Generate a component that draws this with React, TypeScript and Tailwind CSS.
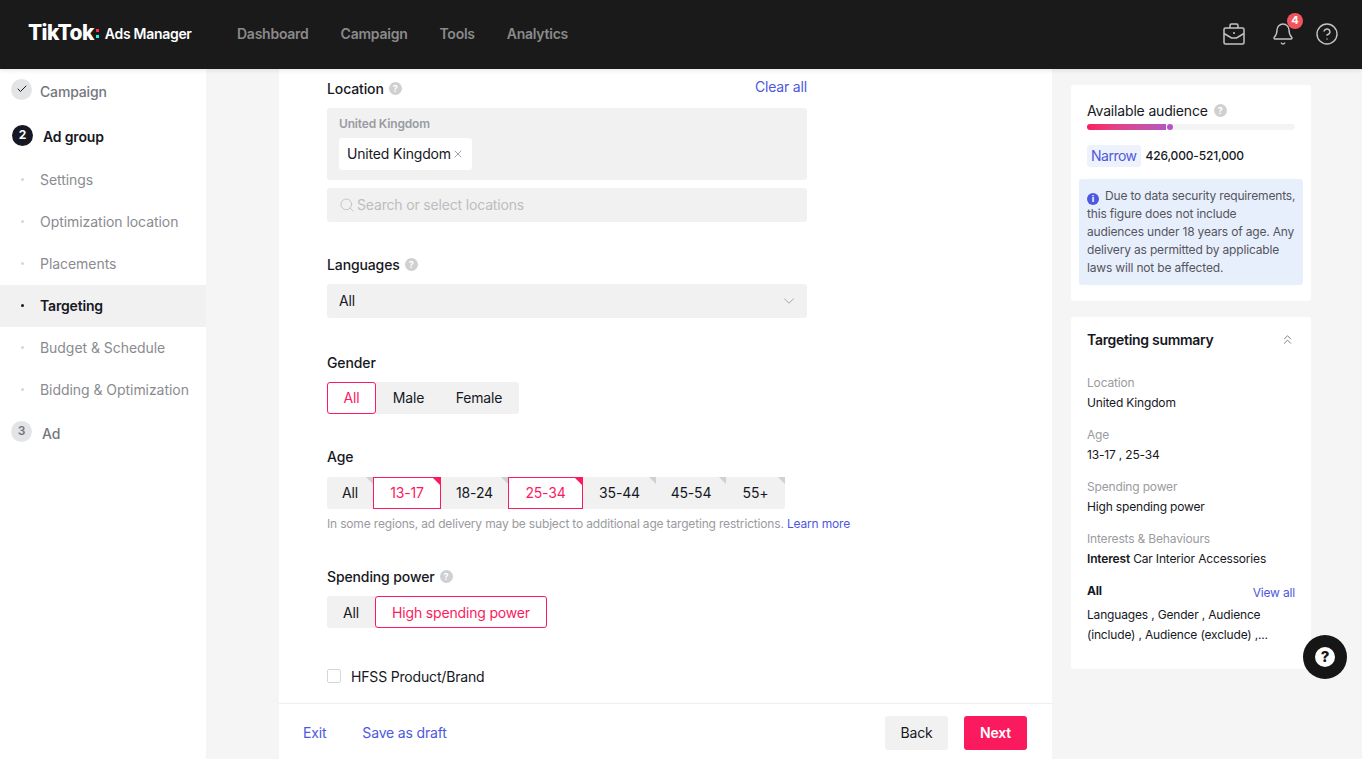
import React from 'react';
import { Check, ChevronDown, X, Search, ChevronsUp, Bell, CircleHelp } from 'lucide-react';

const steps = ['Settings', 'Optimization location', 'Placements', 'Targeting', 'Budget & Schedule', 'Bidding & Optimization'];
const ages = [
  { label: 'All', w: 'w-[46px]' },
  { label: '13-17', w: 'w-[68px]', on: true },
  { label: '18-24', w: 'w-[67px]' },
  { label: '25-34', w: 'w-[75px]', on: true },
  { label: '35-44', w: 'w-[73px]' },
  { label: '45-54', w: 'w-[70px]' },
  { label: '55+', w: 'w-[59px]' },
];

function Hint({ className = '' }: { className?: string }) {
  return (
    <span className={`inline-flex items-center justify-center w-[13px] h-[13px] rounded-full bg-[#cfd0d2] text-white text-[9px] font-bold leading-none ${className}`}>
      ?
    </span>
  );
}

function Label({ text, hint }: { text: string; hint?: boolean }) {
  return (
    <div className="flex items-center gap-[5px] h-[20px] text-[14px] font-medium tracking-[-0.12px] text-[#161823]">
      {text}
      {hint && <Hint />}
    </div>
  );
}

function Summary({ title, children }: { title: string; children: React.ReactNode }) {
  return (
    <div className="mb-[12px] text-[12px] leading-[20px]">
      <div className="text-[#9a9ba0]">{title}</div>
      <div className="text-[#161823]">{children}</div>
    </div>
  );
}

export default function App() {
  return (
    <div className="h-[759px] overflow-hidden flex flex-col bg-[#f5f5f5] font-['Inter',sans-serif] tracking-[-0.17px] text-[#161823]">
      <header className="h-[69px] shrink-0 bg-[#1a1a1a] flex items-center pl-[28px] pr-[23px] pb-[2px] shadow-[0_2px_4px_rgba(0,0,0,0.08)] z-10">
        <div className="flex items-center w-[209px] text-white">
          <span className="text-[21px] font-extrabold tracking-[-0.6px] leading-[24px] -translate-y-[1px]">TikTok</span>
          <span className="flex flex-col gap-[3px] ml-[2px] mr-[6px]">
            <span className="w-[3px] h-[3px] bg-[#fe2c55]" />
            <span className="w-[3px] h-[3px] bg-[#25f4ee]" />
          </span>
          <span className="text-[14px] font-semibold tracking-[-0.3px]">Ads Manager</span>
        </div>
        <nav className="flex gap-[32px] text-[14px] font-semibold tracking-[-0.25px] text-[#8a8a8a]">
          <span>Dashboard</span>
          <span>Campaign</span>
          <span>Tools</span>
          <span>Analytics</span>
        </nav>
        <div className="ml-auto flex items-center text-[#c4c4c4]">
          <svg width="24" height="24" viewBox="0 0 24 24" fill="none" stroke="currentColor" strokeWidth="1.5" className="mr-[25px]">
            <path d="M2 7.500a1.500 1.500 0 0 1 1.500-1.500h17a1.500 1.500 0 0 1 1.500 1.500v13a1.500 1.500 0 0 1-1.500 1.500h-17A1.500 1.500 0 0 1 2 20.500z" />
            <path d="M8 6V3.500A1.500 1.500 0 0 1 9.500 2h5A1.500 1.500 0 0 1 16 3.500V6" />
            <path d="M2 11.500l7.500 4.500h5l7.500-4.500" />
            <circle cx="12" cy="11" r="1" fill="currentColor" stroke="none" />
          </svg>
          <div className="relative mr-[20px]">
            <Bell size={24} strokeWidth={1.4} />
            <span className="absolute -top-[9px] left-[16px] w-[16px] h-[16px] rounded-full bg-[#f2545b] text-white text-[11px] font-bold flex items-center justify-center">4</span>
          </div>
          <CircleHelp size={24} strokeWidth={1.4} />
        </div>
      </header>

      <div className="flex flex-1 min-h-0">
        <aside className="w-[206px] shrink-0 bg-white">
          <div className="flex items-center h-[22px] mt-[11px] pl-[11px] text-[14px] font-medium text-[#75767c]">
            <span className="w-[21px] h-[21px] rounded-full bg-[#e3e4e6] flex items-center justify-center mr-[8px] -translate-y-[2px]">
              <Check size={12} strokeWidth={2} className="text-[#161823]" />
            </span>
            Campaign
          </div>
          <div className="flex items-center h-[22px] mt-[23px] pl-[12px] text-[14px] font-semibold text-[#161823]">
            <span className="w-[21px] h-[21px] rounded-full bg-[#161823] text-white text-[12px] font-bold flex items-center justify-center mr-[10px] -translate-y-[1px]">2</span>
            Ad group
          </div>
          <ul className="mt-[12px]">
            {steps.map((s) => {
              const on = s === 'Targeting';
              return (
                <li key={s} className={`h-[42px] flex items-center pl-[21px] pb-[2px] text-[14px] ${on ? 'bg-[#f1f1f2] font-semibold text-[#161823]' : 'tracking-[-0.05px] text-[#8a8b90]'}`}>
                  <span className={`w-[3px] h-[3px] rounded-full mr-[16px] ${on ? 'bg-[#161823]' : 'bg-[#d5d6d8]'}`} />
                  {s}
                </li>
              );
            })}
          </ul>
          <div className="flex items-center h-[22px] mt-[11px] pl-[11px] text-[14px] font-medium text-[#75767c]">
            <span className="w-[21px] h-[21px] rounded-full bg-[#e3e4e6] text-[#75767c] text-[12px] font-semibold flex items-center justify-center mr-[10px] -translate-y-[2px]">3</span>
            Ad
          </div>
        </aside>

        <main className="ml-[73px] w-[773px] shrink-0 bg-white flex flex-col">
          <div className="flex-1 min-h-0 pl-[48px] pr-[245px] pt-[9px]">
            <div className="flex justify-between">
              <Label text="Location" hint />
              <span className="text-[14px] text-[#4d58e0] -translate-y-[2px]">Clear all</span>
            </div>
            <div className="mt-[9px] h-[72px] rounded-[3px] bg-[#f1f1f2] px-[12px] pt-[8px]">
              <div className="text-[12px] leading-[16px] font-semibold text-[#9a9ba0]">United Kingdom</div>
              <div className="mt-[6px] inline-flex items-center h-[32px] pb-[1px] px-[8px] bg-white rounded-[3px] text-[14px]">
                United Kingdom
                <X size={12} strokeWidth={1.4} className="ml-[1px] text-[#75767c]" />
              </div>
            </div>
            <div className="mt-[8px] h-[34px] pb-[2px] rounded-[3px] bg-[#f1f1f2] px-[12px] flex items-center text-[14px] text-[#bcbdc0]">
              <Search size={16} strokeWidth={1.3} className="mr-[2px] translate-y-[1px]" />
              Search or select locations
            </div>

            <div className="mt-[32px]">
              <Label text="Languages" hint />
            </div>
            <div className="mt-[10px] h-[34px] pb-[2px] rounded-[3px] bg-[#f1f1f2] pl-[12px] pr-[9px] flex items-center justify-between text-[14px]">
              All
              <ChevronDown size={18} strokeWidth={1} className="text-[#8a8b90] translate-y-[1px]" />
            </div>

            <div className="mt-[34px]">
              <Label text="Gender" />
            </div>
            <div className="mt-[10px] inline-flex h-[32px] rounded-[3px] bg-[#f1f1f2] text-[14px]">
              <span className="w-[49px] pb-[2px] flex items-center justify-center rounded-[3px] border border-[#fc1a5e] bg-white text-[#fc1a5e]">All</span>
              <span className="w-[65px] pb-[2px] flex items-center justify-center">Male</span>
              <span className="w-[78px] pr-[2px] pb-[2px] flex items-center justify-center">Female</span>
            </div>

            <div className="mt-[32px]">
              <Label text="Age" />
            </div>
            <div className="mt-[11px] flex h-[32px] w-[458px] rounded-[3px] bg-[#f1f1f2] text-[14px]">
              {ages.map((a) => (
                <span key={a.label} className={`relative pb-[2px] flex items-center justify-center ${a.w} ${a.on ? 'border border-[#fc1a5e] bg-white text-[#fc1a5e]' : ''}`}>
                  {a.label}
                  <span className={`absolute top-0 right-0 w-0 h-0 border-l-[7px] border-l-transparent border-t-[7px] ${a.on ? 'border-t-[#fc1a5e]' : 'border-t-[#cfd0d2]'}`} />
                </span>
              ))}
            </div>
            <div className="mt-[7px] h-[16px] text-[12px] leading-[16px] text-[#9a9ba0] whitespace-nowrap">
              In some regions, ad delivery may be subject to additional age targeting restrictions. <span className="text-[#4d58e0]">Learn more</span>
            </div>

            <div className="mt-[34px]">
              <Label text="Spending power" hint />
            </div>
            <div className="mt-[10px] inline-flex h-[32px] rounded-[3px] bg-[#f1f1f2] text-[14px]">
              <span className="w-[48px] flex items-center justify-center">All</span>
              <span className="w-[172px] flex items-center justify-center rounded-[3px] border border-[#fc1a5e] bg-white text-[#fc1a5e]">High spending power</span>
            </div>

            <div className="mt-[38px] flex items-center h-[20px] text-[14px]">
              <span className="w-[14px] h-[14px] rounded-[2px] border border-[#d5d6d8] bg-white mr-[10px]" />
              HFSS Product/Brand
            </div>
          </div>
          <footer className="h-[56px] shrink-0 border-t border-[#eeeeef] flex items-center pt-[2px] pl-[24px] pr-[25px] text-[14px]">
            <span className="text-[#4d58e0] mr-[36px]">Exit</span>
            <span className="text-[#4d58e0]">Save as draft</span>
            <span className="ml-auto w-[63px] h-[34px] rounded-[3px] bg-[#f1f1f2] flex items-center justify-center">Back</span>
            <span className="ml-[16px] w-[63px] h-[34px] rounded-[3px] bg-[#fc1a5e] text-white font-semibold flex items-center justify-center">Next</span>
          </footer>
        </main>

        <div className="relative ml-[19px] w-[240px] shrink-0 pt-[16px]">
          <section className="h-[216px] rounded-[3px] bg-white pt-[15px]">
            <div className="pl-[16px] flex items-center gap-[6px] h-[20px] text-[14px]">
              Available audience
              <Hint />
            </div>
            <div className="relative mx-[16px] mt-[4px] h-[6px] rounded-full bg-[#f4f4f5]">
              <div className="h-full w-[79px] rounded-l-full bg-gradient-to-r from-[#fc1a5e] to-[#b655c0]" />
              <span className="absolute left-[80px] top-0 w-[6px] h-[6px] rounded-full bg-[#b655c0]" />
            </div>
            <div className="mt-[15px] pl-[16px] flex items-center text-[12px] font-medium">
              <span className="h-[22px] px-[4px] mr-[5px] rounded-[3px] bg-[#eef2fc] text-[14px] font-normal tracking-[-0.5px] leading-[22px] text-[#4d58e0]">Narrow</span>
              426,000-521,000
            </div>
            <div className="mx-[8px] mt-[12px] h-[106px] rounded-[3px] bg-[#e8effc] px-[8px] pt-[8px] text-[12px] leading-[18px] text-[#54555c] whitespace-nowrap">
              <span className="inline-flex align-[-2px] items-center justify-center w-[12px] h-[12px] rounded-full bg-[#4d58e0] text-white text-[9px] font-bold mr-[6px]">i</span>
              Due to data security requirements,<br />
              this figure does not include<br />
              audiences under 18 years of age. Any<br />
              delivery as permitted by applicable<br />
              laws will not be affected.
            </div>
          </section>

          <section className="mt-[16px] h-[352px] rounded-[3px] bg-white px-[16px] pt-[12px]">
            <div className="flex items-center justify-between h-[20px] text-[14px] font-semibold tracking-[-0.3px]">
              Targeting summary
              <ChevronsUp size={15} strokeWidth={1.5} className="text-[#75767c]" />
            </div>
            <div className="mt-[24px]">
              <Summary title="Location">United Kingdom</Summary>
              <Summary title="Age">13-17 , 25-34</Summary>
              <Summary title="Spending power">High spending power</Summary>
              <Summary title="Interests & Behaviours"><span className="font-semibold">Interest</span> Car Interior Accessories</Summary>
            </div>
            <div className="flex justify-between text-[12px] leading-[20px]">
              <span className="font-bold">All</span>
              <span className="text-[#4d58e0] translate-y-[2px]">View all</span>
            </div>
            <div className="mt-[4px] text-[12px] leading-[20px]">
              Languages , Gender , Audience (include) , Audience (exclude) ,...
            </div>
          </section>

          <button className="absolute left-[232px] top-[566px] w-[44px] h-[44px] rounded-full bg-[#161616] flex items-center justify-center">
            <span className="w-[20px] h-[20px] rounded-full bg-white text-[#161616] text-[15px] font-extrabold leading-[20px] text-center">?</span>
          </button>
        </div>
      </div>
    </div>
  );
}
